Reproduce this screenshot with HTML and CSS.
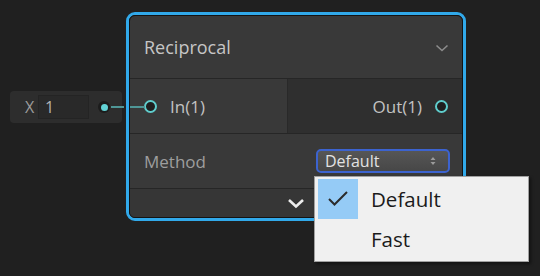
FILE: index.html
```html
<!DOCTYPE html>
<html lang="en">
<head>
    <meta charset="UTF-8">
    <meta name="viewport" content="width=device-width, initial-scale=1.0">
    <title>Reciprocal Node</title>
    <link rel="stylesheet" href="styles.css">
</head>
<body>
    <div class="graph">
        <div class="inline-field">
            <span class="field-label">X</span>
            <span class="field-input">1</span>
            <span class="field-port"><span class="field-dot"></span></span>
        </div>

        <div class="node">
            <div class="node-body">
                <div class="node-title">
                    <span>Reciprocal</span>
                    <svg class="title-chevron" width="14" height="8" viewBox="0 0 14 8">
                        <path d="M1.5 1.5 L7 6.5 L12.5 1.5" fill="none" stroke="#8c8c8c" stroke-width="1.6"/>
                    </svg>
                </div>
                <div class="node-ports">
                    <div class="port-col inputs">
                        <div class="port"><span class="port-ring"></span>In(1)</div>
                    </div>
                    <div class="port-col outputs">
                        <div class="port">Out(1)<span class="port-ring"></span></div>
                    </div>
                </div>
                <div class="node-setting">
                    <span>Method</span>
                    <div class="dropdown">
                        <span>Default</span>
                        <svg width="6" height="10" viewBox="0 0 6 10">
                            <path d="M0.5 4 L3 1 L5.5 4 Z M0.5 6 L3 9 L5.5 6 Z" fill="#9a9a9a"/>
                        </svg>
                    </div>
                </div>
                <div class="node-footer">
                    <svg width="18" height="11" viewBox="0 0 18 11">
                        <path d="M2 2 L9 8.5 L16 2" fill="none" stroke="#ececec" stroke-width="2.6"/>
                    </svg>
                </div>
            </div>
        </div>

        <svg class="edge" width="36" height="6" viewBox="0 0 36 6">
            <line x1="0" y1="3" x2="13" y2="3" stroke="#4f9797" stroke-width="2"/>
            <line x1="19" y1="3" x2="34" y2="3" stroke="#4f9797" stroke-width="2"/>
        </svg>

        <div class="popup-menu">
            <div class="menu-item">
                <span class="menu-check checked">
                    <svg width="40" height="40" viewBox="0 0 40 40">
                        <path d="M11 20 L16.5 25.5 L29 13" fill="none" stroke="#2b2b2b" stroke-width="2"/>
                    </svg>
                </span>
                Default
            </div>
            <div class="menu-item">
                <span class="menu-check"></span>
                Fast
            </div>
        </div>
    </div>
</body>
</html>
```

FILE: styles.css
```css
body {
    margin: 0;
    background: #202020;
    font-family: "Open Sans", "Noto Sans", sans-serif;
}
.graph {
    position: relative;
    width: 540px;
    height: 276px;
    overflow: hidden;
}

/* inline value field on the left */
.inline-field {
    position: absolute;
    left: 10px;
    top: 91px;
    width: 112px;
    height: 32px;
    box-sizing: border-box;
    display: flex;
    align-items: center;
    padding-left: 15px;
    background: #2d2d2d;
    border-radius: 4px;
}
.field-label {
    color: #9c9c9c;
    font-size: 16px;
    width: 13px;
}
.field-input {
    width: 51px;
    height: 24px;
    box-sizing: border-box;
    padding-left: 6px;
    background: #292929;
    border: 1px solid #242424;
    color: #b4b4b4;
    font-size: 16px;
    line-height: 22px;
}
.field-port {
    margin-left: 9px;
    width: 12px;
    height: 12px;
    border-radius: 50%;
    background: #1c1c1c;
    display: flex;
    align-items: center;
    justify-content: center;
}
.field-dot {
    width: 7px;
    height: 7px;
    border-radius: 50%;
    background: #62d3d6;
}
.edge {
    position: absolute;
    left: 111px;
    top: 104px;
}

/* node */
.node {
    position: absolute;
    left: 126px;
    top: 12px;
    width: 340px;
    border: 3px solid #31a9ea;
    border-radius: 9px;
    box-sizing: border-box;
}
.node-body {
    border: 1px solid #141414;
    border-radius: 6px;
    background: #393939;
    overflow: hidden;
}
.node-title {
    height: 62px;
    display: flex;
    align-items: center;
    justify-content: space-between;
    padding: 0 13px 0 14px;
    border-bottom: 1px solid #262626;
    color: #c6c6c6;
    font-size: 18px;
}
.title-chevron {
    margin-top: 2px;
}
.node-ports {
    display: flex;
    height: 54px;
    border-bottom: 1px solid #262626;
}
.port-col {
    display: flex;
    align-items: center;
    box-sizing: border-box;
}
.port-col.inputs {
    width: 158px;
    background: #393939;
    border-right: 1px solid #292929;
    padding-left: 14px;
}
.port-col.outputs {
    flex: 1;
    justify-content: flex-end;
    background: #2f2f2f;
    padding-right: 14px;
}
.port {
    display: flex;
    align-items: center;
    gap: 13px;
    color: #c2c2c2;
    font-size: 17px;
}
.port-ring {
    width: 9px;
    height: 9px;
    border: 2px solid #5fcdcc;
    border-radius: 50%;
    background: #1f1f1f;
}
.node-setting {
    height: 54px;
    display: flex;
    align-items: center;
    justify-content: space-between;
    padding: 0 12px 0 14px;
    border-bottom: 1px solid #262626;
    color: #9e9e9e;
    font-size: 17px;
}
.dropdown {
    width: 134px;
    height: 24px;
    box-sizing: border-box;
    display: flex;
    align-items: center;
    justify-content: space-between;
    padding: 0 12px 0 7px;
    border: 2px solid #3c63cf;
    border-radius: 5px;
    background: linear-gradient(#565656, #474747);
    color: #e2e2e2;
    font-size: 16px;
}
.node-footer {
    height: 28px;
    display: flex;
    align-items: center;
    justify-content: center;
    background: #363636;
}

/* popup menu */
.popup-menu {
    position: absolute;
    left: 314px;
    top: 176px;
    width: 215px;
    padding: 2px 3px;
    box-sizing: border-box;
    background: #f0f0f0;
    border: 1px solid #a0a0a0;
    box-shadow: 2px 2px 3px rgba(0, 0, 0, 0.45);
}
.menu-item {
    display: flex;
    align-items: center;
    height: 40px;
    color: #1b1b1b;
    font-size: 20.5px;
}
.menu-check {
    width: 40px;
    height: 40px;
    margin-right: 13px;
}
.menu-check.checked {
    background: #95cbf6;
}
```
